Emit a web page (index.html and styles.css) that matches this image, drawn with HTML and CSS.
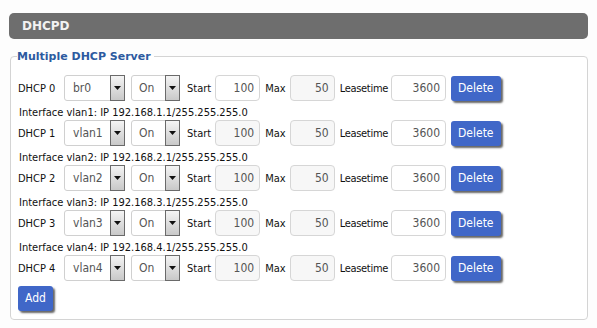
FILE: index.html
```html
<!doctype html>
<html lang="en">
<head>
  <meta charset="utf-8">
  <title>DHCPD</title>
  <link rel="stylesheet" href="styles.css">
</head>
<body>
  <div class="page">
    <div class="sectionHead">DHCPD</div>
    <fieldset class="box">
      <legend>Multiple DHCP Server</legend>

      <div class="row">
        <span class="name">DHCP 0</span>
        <span class="combo wide"><span class="val">br0</span><span class="drop"><svg width="7" height="4" viewBox="0 0 7 4"><path d="M0 0h7L3.5 4z" fill="#111"/></svg></span></span>
        <span class="combo"><span class="val">On</span><span class="drop"><svg width="7" height="4" viewBox="0 0 7 4"><path d="M0 0h7L3.5 4z" fill="#111"/></svg></span></span>
        <span class="lbl first">Start</span><span class="num">100</span>
        <span class="lbl">Max</span><span class="num off">50</span>
        <span class="lbl lease">Leasetime</span><span class="num lease">3600</span>
        <span class="button">Delete</span>
      </div>

      <div class="info">Interface vlan1: IP 192.168.1.1/255.255.255.0</div>
      <div class="row">
        <span class="name">DHCP 1</span>
        <span class="combo wide"><span class="val">vlan1</span><span class="drop"><svg width="7" height="4" viewBox="0 0 7 4"><path d="M0 0h7L3.5 4z" fill="#111"/></svg></span></span>
        <span class="combo"><span class="val">On</span><span class="drop"><svg width="7" height="4" viewBox="0 0 7 4"><path d="M0 0h7L3.5 4z" fill="#111"/></svg></span></span>
        <span class="lbl first">Start</span><span class="num off">100</span>
        <span class="lbl">Max</span><span class="num off">50</span>
        <span class="lbl lease">Leasetime</span><span class="num lease">3600</span>
        <span class="button">Delete</span>
      </div>

      <div class="info">Interface vlan2: IP 192.168.2.1/255.255.255.0</div>
      <div class="row">
        <span class="name">DHCP 2</span>
        <span class="combo wide"><span class="val">vlan2</span><span class="drop"><svg width="7" height="4" viewBox="0 0 7 4"><path d="M0 0h7L3.5 4z" fill="#111"/></svg></span></span>
        <span class="combo"><span class="val">On</span><span class="drop"><svg width="7" height="4" viewBox="0 0 7 4"><path d="M0 0h7L3.5 4z" fill="#111"/></svg></span></span>
        <span class="lbl first">Start</span><span class="num off">100</span>
        <span class="lbl">Max</span><span class="num off">50</span>
        <span class="lbl lease">Leasetime</span><span class="num lease">3600</span>
        <span class="button">Delete</span>
      </div>

      <div class="info">Interface vlan3: IP 192.168.3.1/255.255.255.0</div>
      <div class="row">
        <span class="name">DHCP 3</span>
        <span class="combo wide"><span class="val">vlan3</span><span class="drop"><svg width="7" height="4" viewBox="0 0 7 4"><path d="M0 0h7L3.5 4z" fill="#111"/></svg></span></span>
        <span class="combo"><span class="val">On</span><span class="drop"><svg width="7" height="4" viewBox="0 0 7 4"><path d="M0 0h7L3.5 4z" fill="#111"/></svg></span></span>
        <span class="lbl first">Start</span><span class="num off">100</span>
        <span class="lbl">Max</span><span class="num off">50</span>
        <span class="lbl lease">Leasetime</span><span class="num lease">3600</span>
        <span class="button">Delete</span>
      </div>

      <div class="info">Interface vlan4: IP 192.168.4.1/255.255.255.0</div>
      <div class="row">
        <span class="name">DHCP 4</span>
        <span class="combo wide"><span class="val">vlan4</span><span class="drop"><svg width="7" height="4" viewBox="0 0 7 4"><path d="M0 0h7L3.5 4z" fill="#111"/></svg></span></span>
        <span class="combo"><span class="val">On</span><span class="drop"><svg width="7" height="4" viewBox="0 0 7 4"><path d="M0 0h7L3.5 4z" fill="#111"/></svg></span></span>
        <span class="lbl first">Start</span><span class="num off">100</span>
        <span class="lbl">Max</span><span class="num off">50</span>
        <span class="lbl lease">Leasetime</span><span class="num lease">3600</span>
        <span class="button">Delete</span>
      </div>

      <div class="addRow"><span class="button">Add</span></div>
    </fieldset>
  </div>
</body>
</html>
```

FILE: styles.css
```css
body {
  margin: 0;
  background: #fdfdfd;
  font-family: "DejaVu Sans Condensed", "DejaVu Sans", sans-serif;
  font-size: 11px;
  color: #111;
}
.page {
  padding: 13px 9px 0 9px;
}
.sectionHead {
  height: 26px;
  line-height: 26px;
  padding-left: 13px;
  background: #6e6e6e;
  border-radius: 5px;
  color: #f2f2f2;
  font-family: "DejaVu Sans", sans-serif;
  font-weight: bold;
  font-size: 12px;
}
.box {
  margin: 11px 0 0 1px;
  padding: 12px 6px 8px 7px;
  border: 1px solid #d4d4d4;
  border-radius: 4px;
  background: #fff;
}
.box legend {
  padding: 0 3px 0 0;
  margin-left: -1px;
  color: #2c5aa0;
  font-family: "DejaVu Sans", sans-serif;
  font-weight: bold;
  font-size: 11px;
}
.row {
  display: flex;
  align-items: center;
  height: 26px;
}
.info {
  height: 19px;
  line-height: 24px;
  padding-left: 1px;
}
.name {
  width: 46px;
}
.combo {
  display: flex;
  width: 49px;
  height: 26px;
  box-sizing: border-box;
  border: 1px solid #d0d0d0;
  border-radius: 3px;
  background: #fff;
}
.combo.wide {
  width: 61px;
  margin-right: 6px;
}
.val {
  flex: 1;
  padding-left: 7px;
  line-height: 24px;
  color: #555;
  font-size: 12px;
}
.combo.wide .val {
  padding-left: 8px;
}
.drop {
  display: flex;
  align-items: center;
  justify-content: center;
  width: 13px;
  margin: -1px -1px -1px 0;
  border: 1px solid #6a6a6a;
  background: linear-gradient(#f4f4f4, #c9c9c9);
}
.lbl {
  margin: 0 4px 0 5px;
}
.lbl.first {
  margin-left: 7px;
}
.lbl.lease {
  margin-right: 3px;
  letter-spacing: -0.3px;
}
.num {
  width: 45px;
  height: 26px;
  box-sizing: border-box;
  padding-right: 5px;
  border: 1px solid #d6d6d6;
  border-radius: 4px;
  background: #fff;
  color: #555;
  font-size: 12px;
  line-height: 24px;
  text-align: right;
}
.num.off {
  background: #f7f7f7;
}
.num.lease {
  width: 55px;
}
.button {
  display: inline-block;
  height: 25px;
  padding: 0 7px;
  line-height: 25px;
  border-radius: 3px;
  background: #4067c8;
  color: #fff;
  font-size: 12px;
  box-shadow: 2px 2px 2px #666;
}
.row .button {
  margin-left: 5px;
}
.addRow {
  margin-top: 5px;
}
```
